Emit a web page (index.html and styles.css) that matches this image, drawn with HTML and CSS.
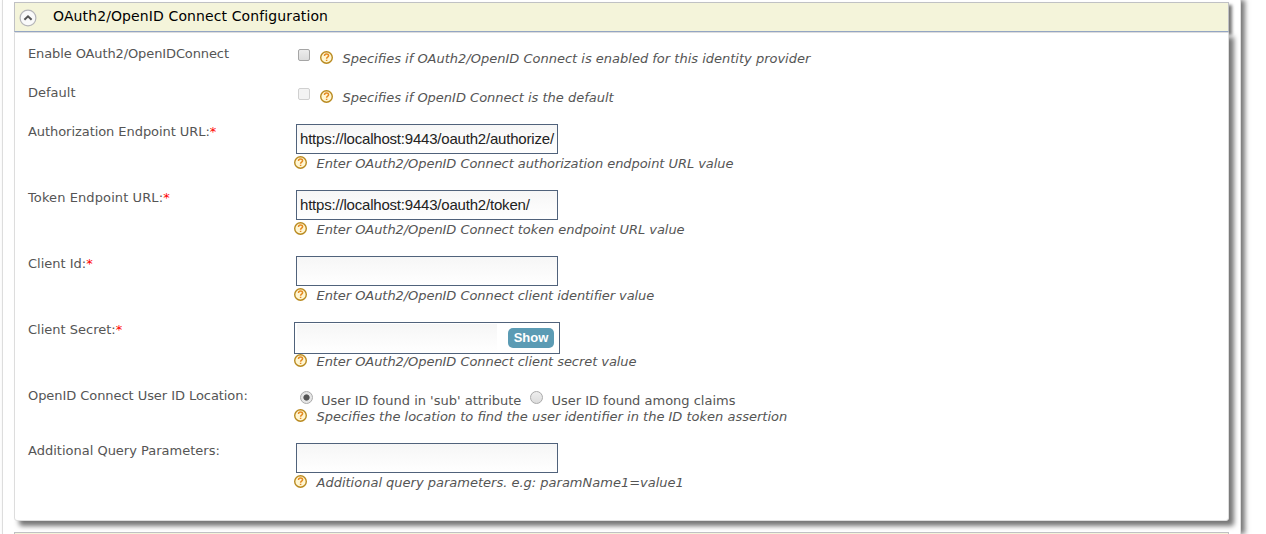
FILE: index.html
```
<!DOCTYPE html>
<html lang="en">
<head>
<meta charset="utf-8">
<title>OAuth2/OpenID Connect Configuration</title>
<link rel="stylesheet" href="styles.css">
</head>
<body>
<svg class="defs" width="0" height="0" aria-hidden="true">
  <symbol id="help" viewBox="0 0 13 13">
    <circle cx="6.5" cy="6.5" r="5.8" fill="#fff6d2" stroke="#b98a20" stroke-width="1.4"/>
    <path d="M4.5 5.1C4.5 3.8 5.3 3.1 6.5 3.1S8.6 3.8 8.6 4.8C8.6 6.2 6.6 6.2 6.6 7.7M6.6 8.7V10.1" fill="none" stroke="#e58a22" stroke-width="1.5"/>
  </symbol>
</svg>
<main class="panel">
  <section class="section">
    <h2 class="section-head">
      <svg class="toggle" viewBox="0 0 18 18"><circle cx="9" cy="9" r="7.9" fill="#fafafa" stroke="#b4b4b8" stroke-width="1.2"/><path d="M5.4 10.8L9 7.3L12.6 10.8" fill="none" stroke="#555" stroke-width="2"/></svg>
      <span class="title">OAuth2/OpenID Connect Configuration</span>
    </h2>
    <form class="section-body">
      <div class="row row-check">
        <label class="label narrow">Enable OAuth2/OpenIDConnect</label>
        <div class="check-field"><span class="checkbox"></span><p class="help"><svg class="icon"><use href="#help"/></svg><span>Specifies if OAuth2/OpenID Connect is enabled for this identity provider</span></p></div>
      </div>
      <div class="row row-check">
        <label class="label">Default</label>
        <div class="check-field"><span class="checkbox checkbox-disabled"></span><p class="help"><svg class="icon"><use href="#help"/></svg><span>Specifies if OpenID Connect is the default</span></p></div>
      </div>
      <div class="row">
        <label class="label tight">Authorization Endpoint URL:<span class="required">*</span></label>
        <div><div class="input">https://localhost:9443/oauth2/authorize/</div><p class="help tight"><svg class="icon"><use href="#help"/></svg><span>Enter OAuth2/OpenID Connect authorization endpoint URL value</span></p></div>
      </div>
      <div class="row">
        <label class="label wide">Token Endpoint URL:<span class="required">*</span></label>
        <div><div class="input">https://localhost:9443/oauth2/token/</div><p class="help tight"><svg class="icon"><use href="#help"/></svg><span>Enter OAuth2/OpenID Connect token endpoint URL value</span></p></div>
      </div>
      <div class="row">
        <label class="label">Client Id:<span class="required">*</span></label>
        <div><div class="input"></div><p class="help tight"><svg class="icon"><use href="#help"/></svg><span>Enter OAuth2/OpenID Connect client identifier value</span></p></div>
      </div>
      <div class="row">
        <label class="label">Client Secret:<span class="required">*</span></label>
        <div><div class="secret"><span class="secret-value"></span><span class="show">Show</span></div><p class="help tight"><svg class="icon"><use href="#help"/></svg><span>Enter OAuth2/OpenID Connect client secret value</span></p></div>
      </div>
      <div class="row row-radio">
        <label class="label tight">OpenID Connect User ID Location:</label>
        <div><div class="radios"><span class="radio radio-on"></span><span class="radio-text">User ID found in 'sub' attribute</span><span class="radio"></span><span class="radio-text">User ID found among claims</span></div><p class="help"><svg class="icon"><use href="#help"/></svg><span>Specifies the location to find the user identifier in the ID token assertion</span></p></div>
      </div>
      <div class="row">
        <label class="label">Additional Query Parameters:</label>
        <div><div class="input"></div><p class="help"><svg class="icon"><use href="#help"/></svg><span>Additional query parameters. e.g: paramName1=value1</span></p></div>
      </div>
    </form>
  </section>
  <div class="next-head"></div>
</main>
</body>
</html>
```
FILE: styles.css
```
* { box-sizing: border-box; }
body { margin: 0; height: 534px; overflow: hidden; background: #fff; font: 13px/16px "DejaVu Sans", sans-serif; color: #555; }
.defs { display: none; }
.panel { width: 1239px; height: 534px; margin: 0 0 0 2px; padding: 2px 11px 0; border: 1px solid #ddd; border-width: 0 1px; box-shadow: 4px 0 5px #777; }
.section { width: 1215px; }
.section-head { display: flex; align-items: center; gap: 16px; height: 30px; margin: 0; padding: 0 0 1px 4px; border: 1px solid #c0c1c4; border-bottom: 1px solid #94a6c4; background: #f4f4da; color: #000; font-size: 14px; font-weight: 400; box-shadow: 3px 3px 3px #777; }
.title { margin-top: -2px; letter-spacing: 0.11px; }
.toggle { width: 18px; height: 18px; margin-top: 2px; }
.section-body { position: relative; height: 489px; padding: 13px 13px 0; border: 1px solid #ddd; border-radius: 0 0 3px 3px; background: #fff; box-shadow: 5px 5px 5px #777; }
.row { display: grid; grid-template-columns: 266px 1fr; height: 66px; }
.row-check { height: 39px; }
.row-radio { height: 55px; }
.tight { letter-spacing: -0.06px; }
.narrow { letter-spacing: -0.11px; }
.wide { letter-spacing: 0.1px; }
.required { color: #f00; }
.help { display: flex; align-items: center; gap: 9.5px; height: 16px; margin: 2px 0 0; font-style: italic; white-space: nowrap; }
.icon { width: 13px; height: 13px; margin-top: -3px; }
.check-field { display: flex; align-items: flex-start; gap: 10px; padding: 3px 0 0 4px; }
.checkbox { width: 12px; height: 12px; border: 1px solid #a5a5a5; border-radius: 2px; background: linear-gradient(#ececec, #dcdcdc); }
.checkbox-disabled { border-color: #d0d0d0; background: #f3f3f3; }
.input { width: 262px; height: 30px; margin: 0 0 0 2px; padding: 0 3px; border: 1px solid #50627b; background: linear-gradient(#f6f6f6, #fff); color: #222; font: 15px/28px "Liberation Sans", sans-serif; letter-spacing: -0.2px; white-space: nowrap; }
.secret { display: flex; align-items: center; justify-content: space-between; width: 266px; height: 32px; padding: 0 5px 0 2px; border: 1px solid #50627b; }
.secret + .help { margin-top: 0; }
.secret-value { width: 200px; height: 28px; background: linear-gradient(#f6f6f6, #fff); }
.show { width: 46px; height: 20px; border-radius: 5px; background: #5b9bb4; color: #fff; font: bold 13px/20px "Liberation Sans", sans-serif; text-align: center; }
.radios { display: flex; align-items: flex-start; height: 21px; padding: 3px 0 0 6px; }
.radios + .help { margin-top: 0; }
.radio { width: 13px; height: 13px; border: 1px solid #aaa; border-radius: 50%; background: linear-gradient(#eee, #dcdcdc); }
.radio-on { background: radial-gradient(circle, #555 0 2.7px, #e6e6e6 3.5px); }
.radio-text { margin: 2px 9px 0 8px; }
.next-head { width: 1215px; height: 2px; margin-top: 11px; border: 1px solid #c0c1c4; border-bottom: 0; background: #f4f4da; }
```
